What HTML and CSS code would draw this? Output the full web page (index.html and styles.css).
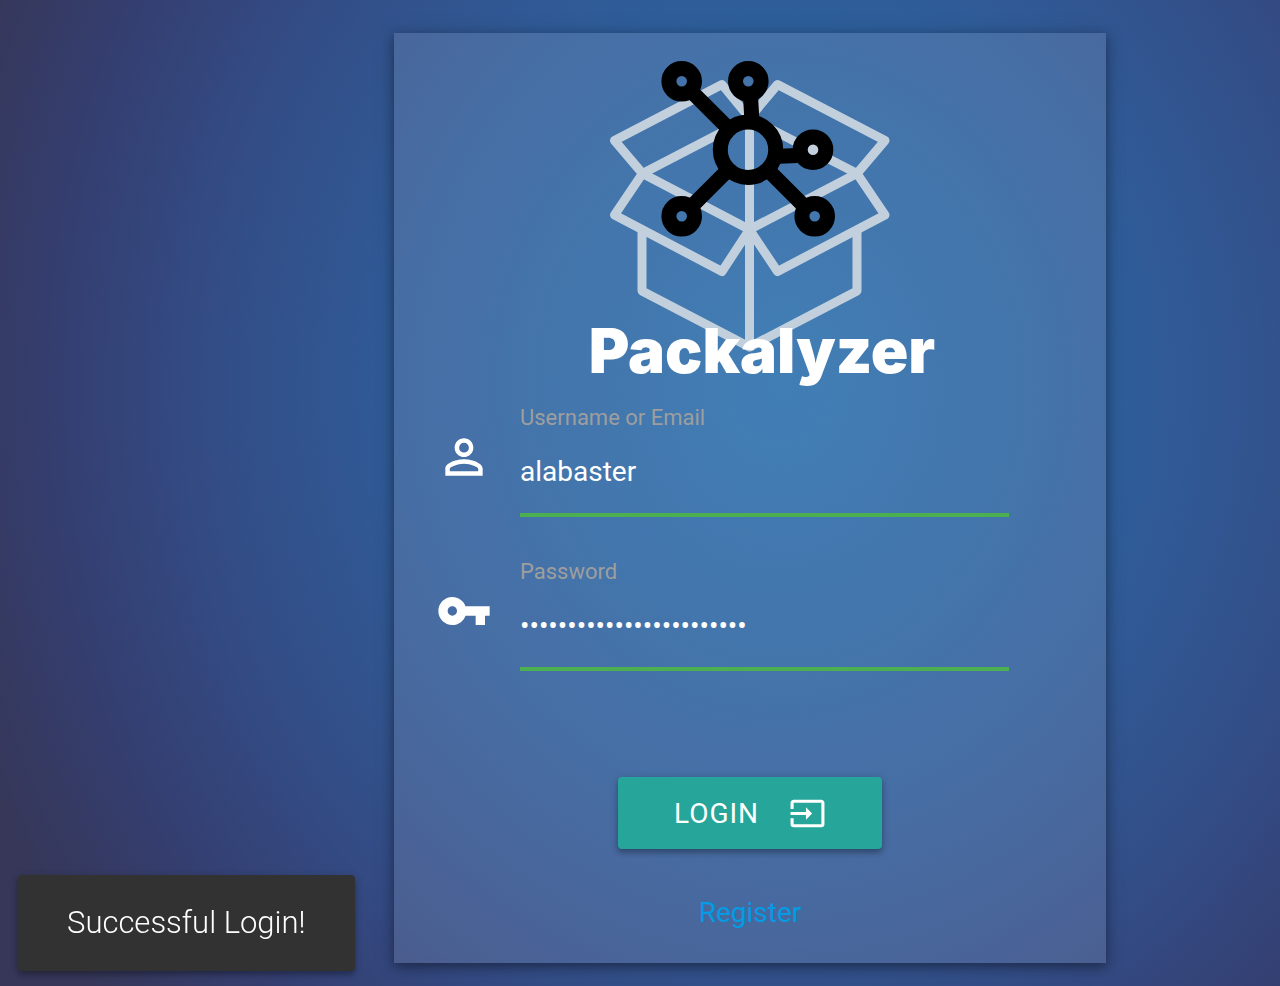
FILE: index.html
```html
<!DOCTYPE html>
<html lang="en">
<head>
  <meta charset="utf-8">
  <title>Packalyzer</title>
  <link rel="stylesheet" href="styles.css">
</head>
<body>
  <main class="page">
    <form class="card">
      <svg class="logo" viewBox="394 33 712 370" role="img" aria-label="Packalyzer">
        <g class="logo-box">
          <path d="M642.5 173.5 749.5 118 857 173.5 749.5 229.5Z"/>
          <path d="M749.5 118 722 84.5 614.5 140.5 642.5 173.5 614.5 215 722 271.5 749.5 229.5"/>
          <path d="M749.5 118 777.5 84.5 885 140.5 857 173.5 885 215 777.5 271.5 749.5 229.5"/>
          <path d="M642 231V291L749.5 347 857 291V231"/>
          <path d="M749.5 118V347"/>
        </g>
        <circle class="logo-dot" cx="813" cy="149.7" r="6"/>
        <g class="logo-net">
          <path d="M692 92 727 127M750.5 96 752 122M774 156.5 797 155.5M728 170 693 205M768 170 804 206"/>
          <circle cx="748" cy="149.7" r="27.7"/>
          <circle cx="681.7" cy="81.3" r="12.8"/>
          <circle cx="748.3" cy="81.3" r="12.8"/>
          <circle cx="813" cy="149.7" r="12.8"/>
          <circle cx="681.7" cy="216.3" r="12.8"/>
          <circle cx="814.7" cy="216.3" r="12.8"/>
        </g>
        <text class="logo-name" x="762" y="373" text-anchor="middle">Packalyzer</text>
      </svg>

      <div class="field">
        <label class="field-label" for="username">Username or Email</label>
        <svg class="field-icon" viewBox="0 0 24 24" aria-hidden="true"><path d="M12 5.9a2.1 2.1 0 1 1 0 4.2 2.1 2.1 0 0 1 0-4.2m0 9c2.97 0 6.1 1.46 6.1 2.1v1.1H5.9V17c0-.64 3.13-2.1 6.1-2.1M12 4C9.79 4 8 5.79 8 8s1.79 4 4 4 4-1.79 4-4-1.79-4-4-4zm0 9c-2.67 0-8 1.34-8 4v3h16v-3c0-2.66-5.33-4-8-4z"/></svg>
        <input class="field-input" id="username" type="text" value="alabaster">
      </div>

      <div class="field">
        <label class="field-label" for="password">Password</label>
        <svg class="field-icon" viewBox="0 0 24 24" aria-hidden="true"><path d="M12.65 10C11.83 7.67 9.61 6 7 6c-3.31 0-6 2.69-6 6s2.69 6 6 6c2.61 0 4.83-1.67 5.65-4H17v4h4v-4h2v-4H12.65zM7 14c-1.1 0-2-.9-2-2s.9-2 2-2 2 .9 2 2-.9 2-2 2z"/></svg>
        <input class="field-input" id="password" type="password" value="abcdefghijklmnopqrstuvwx">
      </div>

      <div class="actions">
        <button class="login" type="button">
          <span>Login</span>
          <svg class="login-icon" viewBox="0 0 24 24" aria-hidden="true"><path d="M21 3.01H3c-1.1 0-2 .9-2 2V9h2V4.99h18v14.03H3V15H1v4.01c0 1.1.9 1.98 2 1.98h18c1.1 0 2-.88 2-1.98v-14c0-1.11-.9-2-2-2zM11 16l4-4-4-4v3H1v2h10v3z"/></svg>
        </button>
        <a class="register" href="#register">Register</a>
      </div>
    </form>
  </main>
  <div class="toast" role="status">Successful Login!</div>
</body>
</html>
```

FILE: styles.css
```css
* {
  box-sizing: border-box;
}

body {
  margin: 0;
  min-height: 100vh;
  font-family: Roboto, sans-serif;
  font-size: 28px;
  color: #fff;
  background: #36385f radial-gradient(860px 990px at 61% 39%, #296eab 0%, #2b639f 28%, #305a96 46%, #334c85 67%, #343f72 83%, #363759 100%) no-repeat;
}

.page {
  display: grid;
  grid-template-columns: 394fr 712fr 174fr;
  padding: 33px 0 23px;
}

.card {
  grid-column: 2;
  display: flex;
  flex-direction: column;
  background: rgba(235, 240, 255, 0.13);
  box-shadow: 0 4px 10px rgba(0, 0, 0, 0.32), 0 2px 20px rgba(0, 0, 0, 0.18);
}

.logo {
  display: block;
  width: 100%;
}

.logo-box {
  fill: none;
  stroke: #c2d0de;
  stroke-width: 9;
  stroke-linejoin: round;
}

.logo-dot {
  fill: #c2d0de;
}

.logo-net {
  fill: none;
  stroke: #000;
  stroke-width: 15;
}

.logo-name {
  font-family: Inter, sans-serif;
  font-size: 62px;
  font-weight: 900;
  font-optical-sizing: none;
  fill: #fff;
}

.field {
  display: grid;
  grid-template-columns: 56px 1fr;
  column-gap: 28px;
  margin: 0 97px 40px 42px;
}

.field-label {
  grid-column: 2;
  padding-top: 4px;
  font-size: 22px;
  line-height: 22px;
  color: #9e9e9e;
}

.field-icon {
  width: 56px;
  height: 56px;
  fill: #fff;
}

.field-input {
  width: 100%;
  height: 88px;
  padding: 0;
  border: 0;
  border-bottom: 4px solid #4caf50;
  outline: 0;
  background: transparent;
  color: #fff;
  font: inherit;
}

.actions {
  display: flex;
  flex-direction: column;
  align-items: center;
  gap: 42px;
  padding: 66px 0 28px;
}

.login {
  display: flex;
  align-items: center;
  gap: 30px;
  height: 72px;
  padding: 0 56px;
  border: 0;
  border-radius: 4px;
  background: #26a69a;
  box-shadow: 0 4px 5px rgba(0, 0, 0, 0.2), 0 2px 8px rgba(0, 0, 0, 0.2);
  color: #fff;
  font: inherit;
  letter-spacing: 1px;
  text-transform: uppercase;
}

.login-icon {
  width: 37px;
  height: 37px;
  fill: #fff;
}

.register {
  line-height: 44px;
  color: #039be5;
  text-decoration: none;
}

.toast {
  position: fixed;
  left: 18px;
  bottom: 15px;
  padding: 24px 49px;
  border-radius: 4px;
  background: #323232;
  box-shadow: 0 4px 5px rgba(0, 0, 0, 0.2), 0 2px 8px rgba(0, 0, 0, 0.2);
  font-size: 31px;
  font-weight: 300;
  line-height: 48px;
}
```
